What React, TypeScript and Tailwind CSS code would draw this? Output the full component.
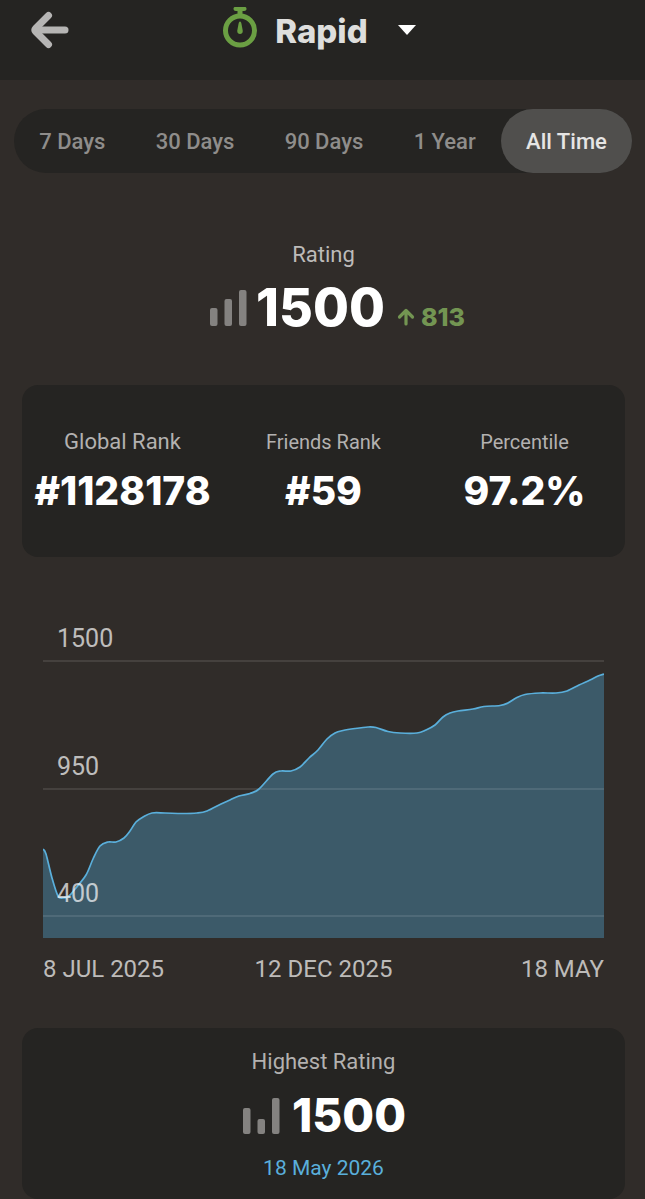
import { useState } from 'react';

const periods = ['7 Days', '30 Days', '90 Days', '1 Year', 'All Time'];

const ranks = [
  { label: 'Global Rank', value: '#1128178', labelClass: 'text-[22px]' },
  { label: 'Friends Rank', value: '#59', labelClass: 'text-[20px]' },
  { label: 'Percentile', value: '97.2%', labelClass: 'text-[20px]' },
];

const CHART_WIDTH = 561;
const CHART_HEIGHT = 278;

// rating history, in chart units
const history = [
  [0, 189], [3, 194], [9, 218], [15, 236], [20, 238], [26, 236], [32, 229], [43, 215],
  [50, 199], [57, 186], [65, 182], [73, 182], [81, 178], [87, 171], [93, 162], [100, 157],
  [109, 153], [122, 153], [139, 153.5], [154, 153], [164, 151], [178, 144], [187, 140], [196, 136],
  [207, 133.5], [216, 129], [230, 114], [238, 111], [248, 111], [257, 107], [266, 98], [275, 90],
  [284, 79], [292, 73], [300, 70.5], [312, 68.5], [325, 67], [333, 67.5], [345, 71.5], [357, 73],
  [374, 73], [383, 70], [392, 65], [400, 57], [407, 53], [415, 51], [430, 49], [441, 46.5],
  [457, 45.5], [465, 43], [473, 38], [482, 34.5], [497, 33], [513, 33], [524, 31], [536, 25],
  [547, 20], [555, 16], [561, 14],
];

function smoothPath(points: number[][]) {
  let d = `M${points[0][0]} ${points[0][1]}`;
  for (let i = 0; i < points.length - 1; i++) {
    const prev = points[i - 1] || points[i];
    const from = points[i];
    const to = points[i + 1];
    const next = points[i + 2] || to;
    const c1 = [from[0] + (to[0] - prev[0]) / 6, from[1] + (to[1] - prev[1]) / 6];
    const c2 = [to[0] - (next[0] - from[0]) / 6, to[1] - (next[1] - from[1]) / 6];
    d += ` C${c1[0]} ${c1[1]} ${c2[0]} ${c2[1]} ${to[0]} ${to[1]}`;
  }
  return d;
}

function StopwatchIcon() {
  return (
    <svg viewBox="0 0 34 42" className="w-[34px] h-[42px] -mt-2 shrink-0" aria-hidden="true">
      <path d="M12.500 1h9c1.500 0 2 .5 2 1.800S23 5 21 5h-1.500v4h-5V5H13c-2 0-2.500-1-2.500-2.200S11 1 12.500 1Z" fill="#6b9f43" />
      <circle cx="17" cy="24.500" r="14.500" fill="none" stroke="#6b9f43" strokeWidth="5" />
      <path d="M17 15.500c.9 0 1.200 1 1.500 2.500l1.200 6.500c.4 2.300-.9 3.500-2.700 3.500s-3.100-1.200-2.700-3.500L15.500 18c.3-1.500.6-2.500 1.500-2.500Z" fill="#6b9f43" />
    </svg>
  );
}

function BarsIcon({ heights }: { heights: number[] }) {
  return (
    <svg viewBox="0 0 37 37" className="w-[37px] h-[37px] shrink-0" fill="#848280" aria-hidden="true">
      {heights.map((h, i) => (
        <rect key={i} x={i * 14.5} y={37 - h} width="7.500" height={h} rx="2" />
      ))}
    </svg>
  );
}

function Chart() {
  const line = smoothPath(history);

  return (
    <section className="pl-[43px] pr-[41px] mt-[103px]" aria-label="Rating history">
      <div className="relative">
        <svg
          viewBox={`0 0 ${CHART_WIDTH} ${CHART_HEIGHT}`}
          preserveAspectRatio="none"
          className="block w-full h-[278px]"
        >
          <path d={`${line} V${CHART_HEIGHT} H0 Z`} fill="#3c5a69" />
          <g fill="#ffffff" fillOpacity="0.1">
            <rect y="0" width={CHART_WIDTH} height="2" />
            <rect y="128" width={CHART_WIDTH} height="2" />
            <rect y="255" width={CHART_WIDTH} height="2" />
          </g>
          <path d={line} fill="none" stroke="#5aafdb" strokeWidth="1.700" vectorEffect="non-scaling-stroke" />
        </svg>
        <span className="absolute left-[14px] -top-9 text-[25px] leading-[30px] text-white/70">1500</span>
        <span className="absolute left-[14px] top-[92px] text-[25px] leading-[30px] text-white/70">950</span>
        <span className="absolute left-[14px] top-[219px] text-[25px] leading-[30px] text-white/70">400</span>
      </div>
      <div className="grid grid-cols-3 mt-4 text-[24px] leading-[30px] text-[#bdbbb9] whitespace-nowrap">
        <span>8 JUL 2025</span>
        <span className="text-center">12 DEC 2025</span>
        <span className="text-right">18 MAY</span>
      </div>
    </section>
  );
}

export default function App() {
  const [mode, setMode] = useState('Rapid');
  const [period, setPeriod] = useState('All Time');

  return (
    <div className="min-h-screen bg-[#302c29] font-['Roboto',sans-serif]">
      <header className="grid grid-cols-[1fr_auto_1fr] items-start h-20 pl-[30px] pr-9 pt-[6px] bg-[#252422]">
        <button type="button" aria-label="Back" className="w-10 h-12 flex items-center">
          <svg viewBox="0 0 40 38" className="w-10 h-[38px]" fill="none" stroke="#b6b5b4" strokeWidth="7" aria-hidden="true">
            <path d="M6 19H35" strokeLinecap="round" />
            <path d="M18.500 4.500 5.500 17.500Q4 19 5.500 20.500L18.500 33.500" strokeLinecap="round" />
          </svg>
        </button>
        <div className="relative flex items-center gap-[18px]">
          <StopwatchIcon />
          <select
            aria-label="Game mode"
            value={mode}
            onChange={(e) => setMode(e.target.value)}
            className="appearance-none field-sizing-content bg-transparent h-[50px] pr-12 font-['Inter',sans-serif] text-[33px] leading-[50px] font-extrabold text-[#dededd]"
          >
            <option>Rapid</option>
          </select>
          <svg viewBox="0 0 18 10" className="absolute right-0 top-[19px] w-[18px] h-[10px] pointer-events-none" aria-hidden="true">
            <path d="M0 0h18L9 10Z" fill="#fff" />
          </svg>
        </div>
      </header>

      <nav className="flex h-16 mt-[29px] ml-[14px] mr-[13px] rounded-full bg-[#252422]" aria-label="Period">
        {periods.map(name => (
          <button
            key={name}
            type="button"
            aria-pressed={period === name}
            onClick={() => setPeriod(name)}
            className={`flex-auto rounded-full text-[22px] font-medium whitespace-nowrap ${
              period === name ? 'bg-[#504f4d] text-[#e6e5e4]' : 'text-[#8f8d8b]'
            }`}
          >
            {name}
          </button>
        ))}
      </nav>

      <section className="flex flex-col items-center mt-[67px] pl-[2px]">
        <h2 className="text-[22px] leading-[30px] text-[#bdbbb9]">Rating</h2>
        <div className="flex items-baseline h-[56px] mt-[10px] pl-7">
          <BarsIcon heights={[18, 27, 36]} />
          <span className="ml-[9px] font-['Inter',sans-serif] text-[52px] leading-[56px] font-extrabold text-white">1500</span>
          <svg viewBox="0 0 18 18" className="w-[18px] h-[18px] ml-3" fill="none" stroke="#739552" strokeWidth="3.200" strokeLinecap="round" strokeLinejoin="round" aria-hidden="true">
            <path d="M9 16V3M2.500 9 9 2.500l6.500 6.500" />
          </svg>
          <span className="ml-[6px] font-['Inter',sans-serif] text-[25px] leading-[36px] font-extrabold text-[#739552]">813</span>
        </div>
      </section>

      <dl className="grid grid-cols-3 h-[172px] mt-[49px] ml-[22px] mr-5 rounded-2xl bg-[#252422] text-center">
        {ranks.map(rank => (
          <div key={rank.label} className="pt-[42px]">
            <dt className={`leading-[30px] text-[#b3b1b0] ${rank.labelClass}`}>{rank.label}</dt>
            <dd className="mt-[10px] font-['Inter',sans-serif] text-[39px] leading-[48px] font-extrabold text-white">{rank.value}</dd>
          </div>
        ))}
      </dl>

      <Chart />

      <section className="flex flex-col items-center h-[171px] mt-[44px] ml-[22px] mr-5 pt-[19px] rounded-2xl bg-[#252422]">
        <h2 className="text-[22px] leading-[30px] text-[#b3b1b0]">Highest Rating</h2>
        <div className="flex items-center h-[56px] mt-[10px] pl-[2px]">
          <BarsIcon heights={[26, 15, 36]} />
          <span className="ml-3 font-['Inter',sans-serif] text-[46px] leading-[56px] font-extrabold text-white">1500</span>
        </div>
        <p className="mt-[10px] text-[21px] leading-[30px] text-[#5aafdb]">18 May 2026</p>
      </section>
    </div>
  );
}
